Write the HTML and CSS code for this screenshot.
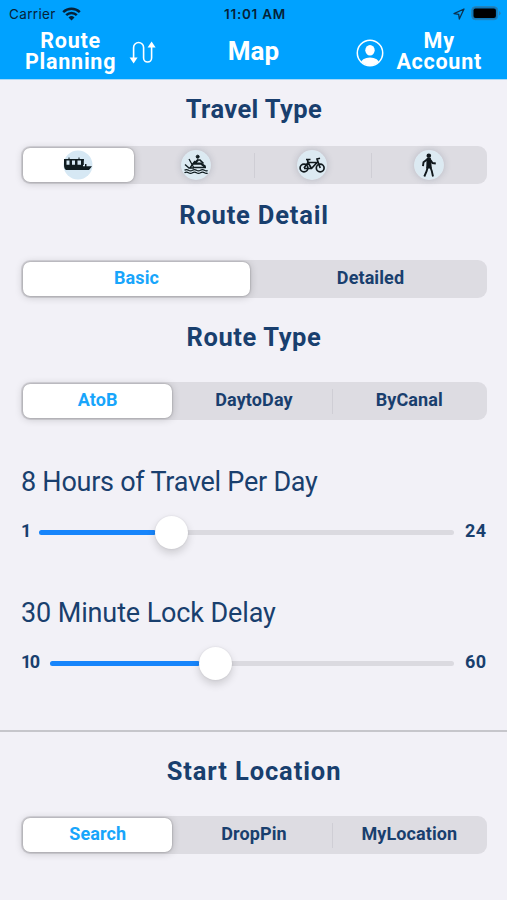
FILE: index.html
```html
<!DOCTYPE html>
<html lang="en">
<head>
<meta charset="utf-8">
<title>Route Planning</title>
<link rel="stylesheet" href="styles.css">
</head>
<body>
<header class="top">
  <div class="status">
    <div class="carrier"><span>Carrier</span>
      <svg width="19" height="14" viewBox="0 0 19 14" fill="none" stroke="#062238" stroke-width="2.5"><path d="M1.2 5.1a12 12 0 0 1 16.6 0M4.2 8.2a7.6 7.6 0 0 1 10.6 0"/><path d="M9.5 13.4 6.5 10.4a4.4 4.4 0 0 1 6 0z" fill="#062238" stroke="none"/></svg>
    </div>
    <span class="time">11:01 AM</span>
    <div class="indicators">
      <svg width="12" height="12" viewBox="0 0 12 12" fill="none" stroke="#0b3150" stroke-width="1.3" stroke-linejoin="round"><path d="M11 1 1 5.6l4.7.8.6 4.6z"/></svg>
      <svg width="30" height="15" viewBox="0 0 30 15"><rect x=".7" y=".7" width="26" height="13" rx="3.6" fill="#0c79bd" stroke="#2b80b2"/><rect x="2.5" y="2.5" width="22.4" height="9.4" rx="2" fill="#000"/><path d="M28 5v4.6q1.6-.8 1.6-2.3T28 5z" fill="#2b80b2"/></svg>
    </div>
  </div>
  <nav class="nav">
    <div class="nav-item route"><div class="lines"><span>Route</span><span>Planning</span></div>
      <svg width="27" height="24" viewBox="0 0 27 24" fill="none" stroke="#fff" stroke-width="1.6"><path d="M5 17V6.500a5 5 0 0 1 10 0v10.500a4 4 0 0 0 8 0V6" transform="translate(-.4 0)"/><path d="M.6 16.500h8L4.600 22.500zM18.600 6.500h8L22.600.6z" fill="#fff" stroke="none"/></svg>
    </div>
    <span class="map">Map</span>
    <div class="nav-item account">
      <svg width="28" height="28" viewBox="0 0 28 28"><defs><clipPath id="disc"><circle cx="14" cy="14" r="12.500"/></clipPath></defs><circle cx="14" cy="14" r="12.700" fill="none" stroke="#fff" stroke-width="1.500"/><ellipse cx="14" cy="11.200" rx="4.700" ry="5.300" fill="#fff"/><ellipse cx="14" cy="25" rx="9.500" ry="6.600" fill="#fff" clip-path="url(#disc)"/></svg>
      <div class="lines"><span>My</span><span>Account</span></div>
    </div>
  </nav>
</header>
<main>
  <section class="planning">
    <h2 class="t-travel">Travel Type</h2>
    <div class="segments four">
      <div class="seg selected">
        <svg width="30" height="30" viewBox="0 0 30 30"><circle cx="15" cy="15" r="14.500" fill="#d6e8f4"/><g fill="#101c20"><path d="M1 14.800h19v1.400h9l-3 3.800H3q-2-1-2-5.200zM1 9h20v1.500H1zM1 10h2.500v5H1zM6.500 10h2.500v5H6.500zM12 10h2.500v5H12zM18 10h2.800v5H18zM5.500 7.500h1v2h-1zM15.500 7.500h1V9h-1zM22 14h1.500v3H22z"/></g></svg>
      </div>
      <div class="seg">
        <svg class="disc" width="30" height="30" viewBox="0 0 30 30"><circle cx="15" cy="15" r="15" fill="#dceaf2"/><g fill="none" stroke="#101c20" stroke-width="1.300"><circle cx="16.700" cy="6.700" r="1.500" fill="#101c20" stroke-width="1"/><path d="m17 10-4 3.700h7l4.500 3.300" stroke-width="2.200"/><path d="M16 10h3l3.500 3.500" stroke-width="1.700"/><path d="m8 9 5 9M8.500 18.500 14 11M4 14.500l4 3.500h5"/><path d="M13 17.500h12"/><path d="M3.500 20.300q2-1.300 4 0t4 0 4 0 4 0 4 0 3 0M3.500 22.800q2-1.300 4 0t4 0 4 0 4 0 4 0 3 0"/></g></svg>
      </div>
      <div class="seg">
        <svg class="disc" width="30" height="30" viewBox="0 0 30 30"><circle cx="15" cy="15" r="15" fill="#dceaf2"/><g fill="none" stroke="#11191d" stroke-width="1.700"><circle cx="7" cy="18" r="3.900"/><circle cx="23.200" cy="18" r="3.900"/><path d="M7 18 11 12.500h9l-5.500 6H7M11 12.500l3.500 6M23.200 18 20 9l3-.8M9 9.500h4.500M11 12.500l-.5-3"/></g></svg>
      </div>
      <div class="seg">
        <svg class="disc" width="30" height="30" viewBox="0 0 30 30"><circle cx="15" cy="15" r="15" fill="#dceaf2"/><circle cx="14.800" cy="5.700" r="2.300" fill="#10181c"/><g fill="none" stroke="#10181c" stroke-width="1.900"><path d="M13.500 9h2.500l.8 8.500h-3.600z" fill="#10181c"/><path d="m13 9.500-3.500 2.700-.5 4M16.500 10l2 3 3.300.5M13.700 17l-1 4-2.400 5.500M16.300 17l1.500 4 1.200 5.500"/></g></svg>
      </div>
    </div>
    <h2 class="t-detail">Route Detail</h2>
    <div class="segments two"><div class="seg selected">Basic</div><div class="seg">Detailed</div></div>
    <h2 class="t-type">Route Type</h2>
    <div class="segments three"><div class="seg selected">AtoB</div><div class="seg">DaytoDay</div><div class="seg">ByCanal</div></div>
    <p class="label l-hours">8 Hours of Travel Per Day</p>
    <div class="slider hours"><span class="min">1</span><div class="track"><div class="fill"></div><div class="knob"></div></div><span class="max">24</span></div>
    <p class="label l-lock">30 Minute Lock Delay</p>
    <div class="slider lock"><span class="min">10</span><div class="track"><div class="fill"></div><div class="knob"></div></div><span class="max">60</span></div>
  </section>
  <section class="start">
    <h2 class="t-start">Start Location</h2>
    <div class="segments three"><div class="seg selected">Search</div><div class="seg">DropPin</div><div class="seg">MyLocation</div></div>
  </section>
</main>
</body>
</html>
```
FILE: styles.css
```css
* { box-sizing: border-box; }
body { margin: 0; height: 900px; overflow: hidden; background: #f2f1f7; color: #193f6e; font-family: Roboto, "Liberation Sans", sans-serif; }
svg { display: block; flex: none; }
.top { height: 80px; background: #00a2ff; border-bottom: 1px solid #a7d9f8; }
.status { height: 27px; padding: 0 6px 0 9px; display: grid; grid-template-columns: 1fr auto 1fr; align-items: center; font-family: Inter, sans-serif; font-size: 13.5px; color: #062238; }
.carrier { display: flex; align-items: center; gap: 6px; letter-spacing: .35px; }
.time { font-weight: 600; font-size: 13.5px; letter-spacing: .75px; }
.indicators { display: flex; justify-content: flex-end; align-items: center; gap: 6px; }
.nav { height: 52px; padding: 0 25px; display: grid; grid-template-columns: 1fr auto 1fr; align-items: center; color: #fff; font-weight: 700; font-size: 21.5px; line-height: 20.6px; text-align: center; }
.nav-item { display: flex; align-items: center; gap: 13px; padding-bottom: 4px; }
.lines { display: flex; flex-direction: column; letter-spacing: .75px; padding-top: 1px; }
.route svg { margin-top: 3px; }
.account svg { margin-top: 3px; }
.account { justify-content: flex-end; gap: 12px; }
.map { font-size: 26px; padding-bottom: 4px; }
h2 { margin: 0; font-size: 25.5px; line-height: 30px; font-weight: 700; text-align: center; }
.planning { height: 652px; padding: 14px 20px 0 21px; border-bottom: 2px solid #c6c6cb; }
.segments { height: 38px; display: grid; padding: 2px 0; border-radius: 9px; background: #dddce2; font-weight: 700; font-size: 18px; }
.four { grid-template-columns: repeat(4, 1fr); margin-top: 22px; }
.two { grid-template-columns: repeat(2, 1fr); }
.three { grid-template-columns: repeat(3, 1fr); }
.seg { display: flex; align-items: center; justify-content: center; padding-bottom: 3px; letter-spacing: .1px; }
.selected { margin: 0 4px 0 2px; border-radius: 7px; background: #fff; color: #18a5fb; box-shadow: 0 0 2px rgba(0,0,0,.35), 0 1px 9px rgba(0,0,0,.2); }
.four .seg { padding: 0; }
.disc { border-radius: 50%; box-shadow: 0 0 7px rgba(50,70,90,.22); }
.seg:not(.selected) + .seg { background: linear-gradient(#cfced5, #cfced5) 0 50% / 1px 25px no-repeat; }
.t-travel { letter-spacing: .4px; }
.t-detail { margin-top: 16px; letter-spacing: .8px; }
.two { margin-top: 30px; }
.t-type { margin-top: 24px; letter-spacing: .6px; }
.t-type + .three { margin-top: 30px; }
.label { margin: 45px 0 0; font-size: 27px; line-height: 34px; font-weight: 400; letter-spacing: -.25px; }
.slider { height: 34px; margin-top: 16px; display: flex; align-items: center; font-size: 18px; font-weight: 700; }
.slider span { line-height: 20px; padding-bottom: 3px; }
.min { width: 18px; letter-spacing: -1.5px; }
.lock .min { width: 29px; }
.max { width: 33px; padding-left: 11px; letter-spacing: .3px; }
.track { flex: 1; display: flex; align-items: center; height: 5px; border-radius: 3px; background: #dbdae0; }
.fill { height: 5px; border-radius: 3px; background: #1785fb; }
.hours .fill { width: 117px; }
.lock .fill { width: 150px; }
.knob { width: 33px; height: 33px; flex: none; margin-left: -1px; border-radius: 50%; background: #fff; box-shadow: 0 4px 9px rgba(0,0,0,.16), 0 0 2px rgba(0,0,0,.1); }
.l-lock { margin-top: 47px; letter-spacing: -.12px; }
.start { padding: 24px 20px 0 21px; }
.t-start { letter-spacing: .9px; }
.start .three { margin-top: 30px; }
```
